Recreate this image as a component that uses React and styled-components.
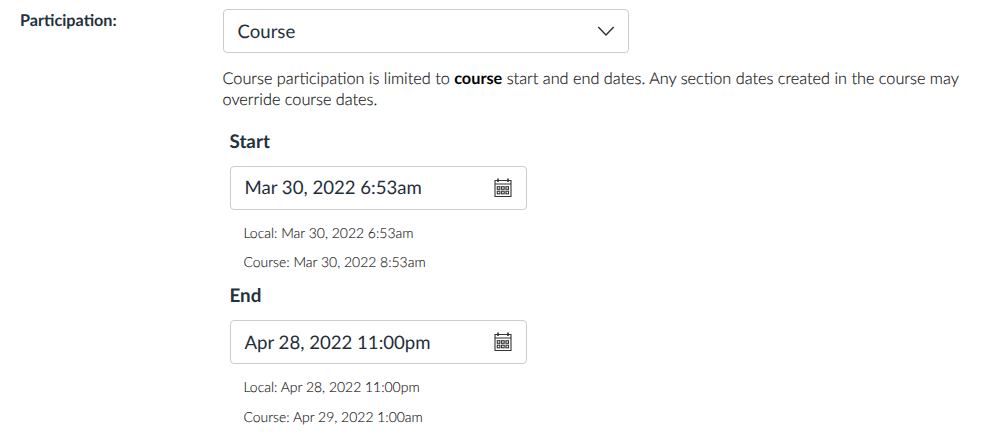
import React from "react"
import styled, { createGlobalStyle } from "styled-components"

const dates = [
  {
    title: "Start",
    value: "Mar 30, 2022 6:53am",
    local: "Local: Mar 30, 2022 6:53am",
    course: "Course: Mar 30, 2022 8:53am",
  },
  {
    title: "End",
    value: "Apr 28, 2022 11:00pm",
    local: "Local: Apr 28, 2022 11:00pm",
    course: "Course: Apr 29, 2022 1:00am",
  },
]

const Calendar = () => (
  <svg width="18" height="20" viewBox="0 0 18 20" fill="none" stroke="#333">
    <path d="M1 2.5h16v16H1zM1 6h16" strokeWidth="1.1" />
    <path d="M4 0.5v3.5M14 0.5v3.5" strokeWidth="1.6" />
    {[8.7, 13.2].map(y =>
      [3.3, 7.6, 11.9].map(x => (
        <rect
          key={`${x}-${y}`}
          x={x}
          y={y}
          width="2.6"
          height="2.6"
          strokeWidth="1.1"
        />
      ))
    )}
  </svg>
)

const App = () => (
  <Row>
    <GlobalStyle />
    <Label>Participation:</Label>
    <Content>
      <Select>
        <span>Course</span>
        <svg width="18" height="11" viewBox="0 0 18 11" fill="none">
          <path d="M1.3 1l7.7 7.9L16.7 1" stroke="#2b2f33" strokeWidth="1.4" />
        </svg>
      </Select>
      <Help>
        Course participation is limited to <strong>course</strong> start and end
        dates. Any section dates created in the course may override course
        dates.
      </Help>
      {dates.map(item => (
        <DateGroup key={item.title}>
          <Title>{item.title}</Title>
          <DateField>
            <span>{item.value}</span>
            <Calendar />
          </DateField>
          <Hint>{item.local}</Hint>
          <Hint>{item.course}</Hint>
        </DateGroup>
      ))}
    </Content>
  </Row>
)

const GlobalStyle = createGlobalStyle`
  body {
    margin: 0;
    background: #fff;
    font-family: Lato, sans-serif;
    color: #22323e;
    text-rendering: geometricPrecision;
  }
`

const Row = styled.div`
  display: flex;
  height: 446px;
  overflow: hidden;
`

const Label = styled.div`
  width: 202.5px;
  padding: 11px 0 0 20px;
  flex: none;
  font-size: 16.2px;
  line-height: 20px;
  font-weight: 700;
`

const Content = styled.div`
  width: 750px;
  padding-top: 9px;
`

const Field = styled.div`
  display: flex;
  align-items: center;
  justify-content: space-between;
  box-sizing: border-box;
  height: 44px;
  border: 1px solid #c7cdd1;
  border-radius: 4px;
  padding: 0 14px;
  font-size: 18.6px;
  color: #1f2e39;

  span {
    padding-bottom: 1px;
  }
`

const Select = styled(Field)`
  width: 406.5px;
  padding-right: 13px;
`

const Help = styled.p`
  margin: 15.4px 0 19.6px;
  font-size: 16.28px;
  line-height: 21px;
  font-weight: 300;
  color: #111;
  -webkit-text-stroke: 0.15px #111;

  strong {
    font-weight: 700;
    color: #000;
    -webkit-text-stroke: 0;
  }
`

const DateGroup = styled.section`
  padding-left: 7px;
  height: 154.5px;
`

const Title = styled.h3`
  margin: 0 0 12.8px;
  font-size: 18.8px;
  line-height: 23px;
  font-weight: 700;
`

const DateField = styled(Field)`
  width: 297.5px;
  margin-bottom: 8px;
  padding-right: 14.4px;
`

const Hint = styled.div`
  padding-left: 14px;
  font-size: 13.95px;
  line-height: 29.5px;
  font-weight: 300;
  color: #111;
  -webkit-text-stroke: 0.1px #111;
`

export default App
